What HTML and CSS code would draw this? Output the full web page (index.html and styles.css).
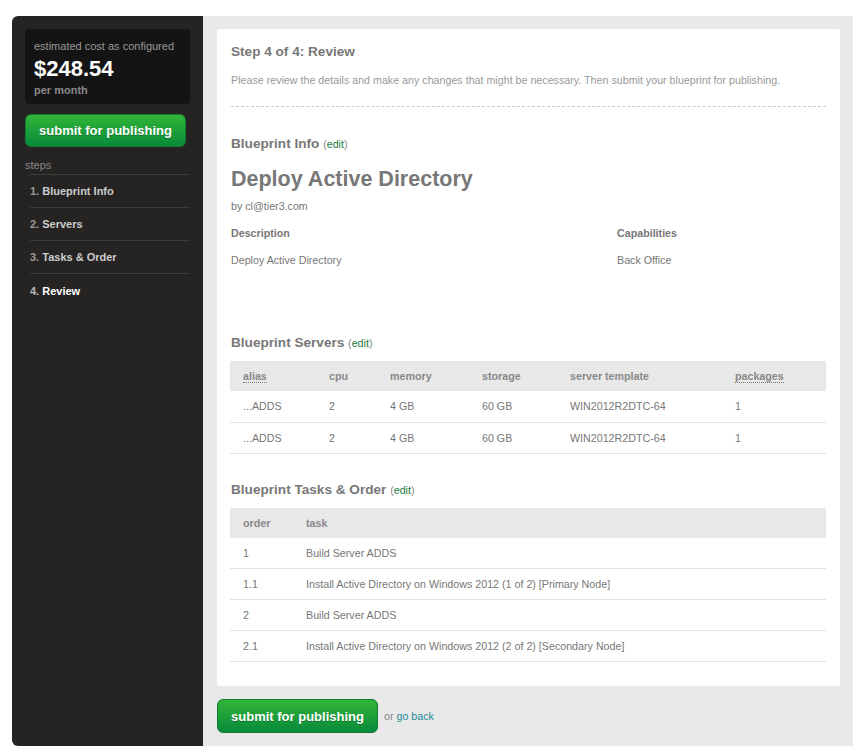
FILE: index.html
```html
<!DOCTYPE html>
<html>
<head>
<meta charset="utf-8">
<link rel="stylesheet" href="styles.css">
</head>
<body>
<div class="frame">
  <aside class="sidebar">
    <div class="cost">
      <div class="cost-label">estimated cost as configured</div>
      <div class="cost-value">$248.54</div>
      <div class="cost-per">per month</div>
    </div>
    <a class="btn btn-side">submit for publishing</a>
    <div class="steps-label">steps</div>
    <ul class="steps">
      <li><span class="num">1.</span> Blueprint Info</li>
      <li><span class="num">2.</span> Servers</li>
      <li><span class="num">3.</span> Tasks &amp; Order</li>
      <li class="active"><span class="num">4.</span> Review</li>
    </ul>
  </aside>
  <main class="main">
    <section class="panel">
      <h1 class="step-title">Step 4 of 4: Review</h1>
      <p class="intro">Please review the details and make any changes that might be necessary. Then submit your blueprint for publishing.</p>
      <hr class="dashed">

      <h2 class="sec-title">Blueprint Info <span class="edit">(<a>edit</a>)</span></h2>
      <div class="bp-name">Deploy Active Directory</div>
      <div class="by">by cl@tier3.com</div>
      <div class="info-grid">
        <div class="info-h">Description</div>
        <div class="info-h">Capabilities</div>
        <div class="info-v">Deploy Active Directory</div>
        <div class="info-v">Back Office</div>
      </div>

      <h2 class="sec-title servers-title">Blueprint Servers <span class="edit">(<a>edit</a>)</span></h2>
      <table class="tbl servers">
        <thead>
          <tr><th><abbr>alias</abbr></th><th>cpu</th><th>memory</th><th>storage</th><th>server template</th><th><abbr>packages</abbr></th></tr>
        </thead>
        <tbody>
          <tr><td>...ADDS</td><td>2</td><td>4 GB</td><td>60 GB</td><td>WIN2012R2DTC-64</td><td>1</td></tr>
          <tr><td>...ADDS</td><td>2</td><td>4 GB</td><td>60 GB</td><td>WIN2012R2DTC-64</td><td>1</td></tr>
        </tbody>
      </table>

      <h2 class="sec-title tasks-title">Blueprint Tasks &amp; Order <span class="edit">(<a>edit</a>)</span></h2>
      <table class="tbl tasks">
        <thead>
          <tr><th>order</th><th>task</th></tr>
        </thead>
        <tbody>
          <tr><td>1</td><td>Build Server ADDS</td></tr>
          <tr><td>1.1</td><td>Install Active Directory on Windows 2012 (1 of 2) [Primary Node]</td></tr>
          <tr><td>2</td><td>Build Server ADDS</td></tr>
          <tr><td>2.1</td><td>Install Active Directory on Windows 2012 (2 of 2) [Secondary Node]</td></tr>
        </tbody>
      </table>
    </section>
    <div class="footer">
      <a class="btn btn-main">submit for publishing</a>
      <span class="or">or <a class="back">go back</a></span>
    </div>
  </main>
</div>
</body>
</html>
```

FILE: styles.css
```css
* { box-sizing: border-box; }
html, body { margin: 0; padding: 0; background: #fff; }
body {
  font-family: "Liberation Sans", Arial, sans-serif;
  font-size: 11px;
  color: #777;
  padding: 16px 12px 10px 12px;
}
.frame {
  display: flex;
  height: 730px;
  width: 841px;
}
.sidebar {
  width: 191px;
  flex: none;
  background: #252423;
  border-radius: 6px 0 0 6px;
  padding: 13px 13px 0 13px;
}
.cost {
  background: #141414;
  border-radius: 4px;
  padding: 10px 9px 8px 9px;
  height: 75px;
}
.cost-label { color: #999; font-size: 11px; line-height: 14px; }
.cost-value { color: #fff; font-weight: bold; font-size: 22px; line-height: 24px; margin-top: 4px; }
.cost-per { color: #888; font-weight: bold; font-size: 11px; line-height: 14px; margin-top: 2px; }
.btn {
  display: inline-flex;
  align-items: center;
  justify-content: center;
  color: #fff;
  font-weight: bold;
  font-size: 13px;
  background: linear-gradient(#33b539, #078a3a);
  border: 1px solid #0d7d33;
  border-radius: 6px;
  text-shadow: 0 1px 0 rgba(0,0,0,0.25);
}
.btn-side {
  width: 161px;
  height: 33px;
  margin-top: 10px;
}
.steps-label {
  color: #888;
  font-size: 11px;
  margin-top: 11px;
  line-height: 14px;
}
.steps {
  list-style: none;
  margin: 2px 0 0 5px;
  padding: 0;
}
.steps li {
  border-top: 1px solid #3c3b3a;
  height: 33px;
  line-height: 32px;
  font-weight: bold;
  color: #ccc;
  padding-left: 0;
  font-size: 11px;
}
.steps li:nth-child(4) { height: 34px; line-height: 34px; }
.steps .num { color: #999; }
.steps li.active { color: #fff; }
.steps li.active .num { color: #bbb; }

.main {
  flex: 1;
  background: #e9e9e9;
  padding: 13px 13px 0 14px;
  font-size: 10.7px;
}
.panel {
  background: #fff;
  border-radius: 3px;
  height: 657px;
  padding: 15px 14px 0 14px;
}
.step-title {
  margin: 0;
  font-size: 13.6px;
  line-height: 16px;
  color: #777;
  font-weight: bold;
}
.intro {
  margin: 13px 0 0 0;
  color: #999;
  font-size: 10.7px;
  line-height: 14px;
}
.dashed {
  border: 0;
  border-top: 1px dashed #ccc;
  margin: 19px 0 0 0;
  height: 0;
}
.sec-title {
  margin: 29px 0 0 0;
  font-size: 13.6px;
  line-height: 16px;
  font-weight: bold;
  color: #777;
}
.edit { font-size: 10.7px; font-weight: normal; color: #888; }
.edit a { color: #177a3d; }
.bp-name {
  margin-top: 14px;
  font-size: 21.5px;
  line-height: 26px;
  font-weight: bold;
  color: #777;
}
.by { margin-top: 7px; line-height: 14px; }
.info-grid {
  display: grid;
  grid-template-columns: 386px 1fr;
  row-gap: 13px;
  margin-top: 13px;
  line-height: 14px;
}
.info-h { font-weight: bold; }
.servers-title { margin-top: 68px; }
.tbl {
  width: calc(100% + 1px);
  margin-left: -1px;
  border-collapse: collapse;
  margin-top: 10px;
  font-size: 10.7px;
}
.tbl th {
  background: #e8e8e8;
  text-align: left;
  font-weight: bold;
  color: #888;
  height: 30px;
  padding: 0 0 0 13px;
}
.tbl td {
  height: 31px;
  padding: 0 0 0 13px;
  border-bottom: 1px solid #e3e3e3;
  color: #777;
}
.tbl abbr {
  text-decoration: none;
  border-bottom: 1px dotted #777;
}
.servers th:nth-child(1) { width: 86px; }
.servers th:nth-child(2) { width: 61px; }
.servers th:nth-child(3) { width: 92px; }
.servers th:nth-child(4) { width: 88px; }
.servers th:nth-child(5) { width: 165px; }
.tasks-title { margin-top: 28px; }
.tasks { margin-top: 10px; }
.tasks th:nth-child(1) { width: 63px; }
.footer {
  display: flex;
  align-items: center;
  margin-top: 13px;
}
.btn-main {
  width: 161px;
  height: 34px;
}
.or { margin-left: 6px; color: #888; }
.back { color: #1d8a9e; }
```
